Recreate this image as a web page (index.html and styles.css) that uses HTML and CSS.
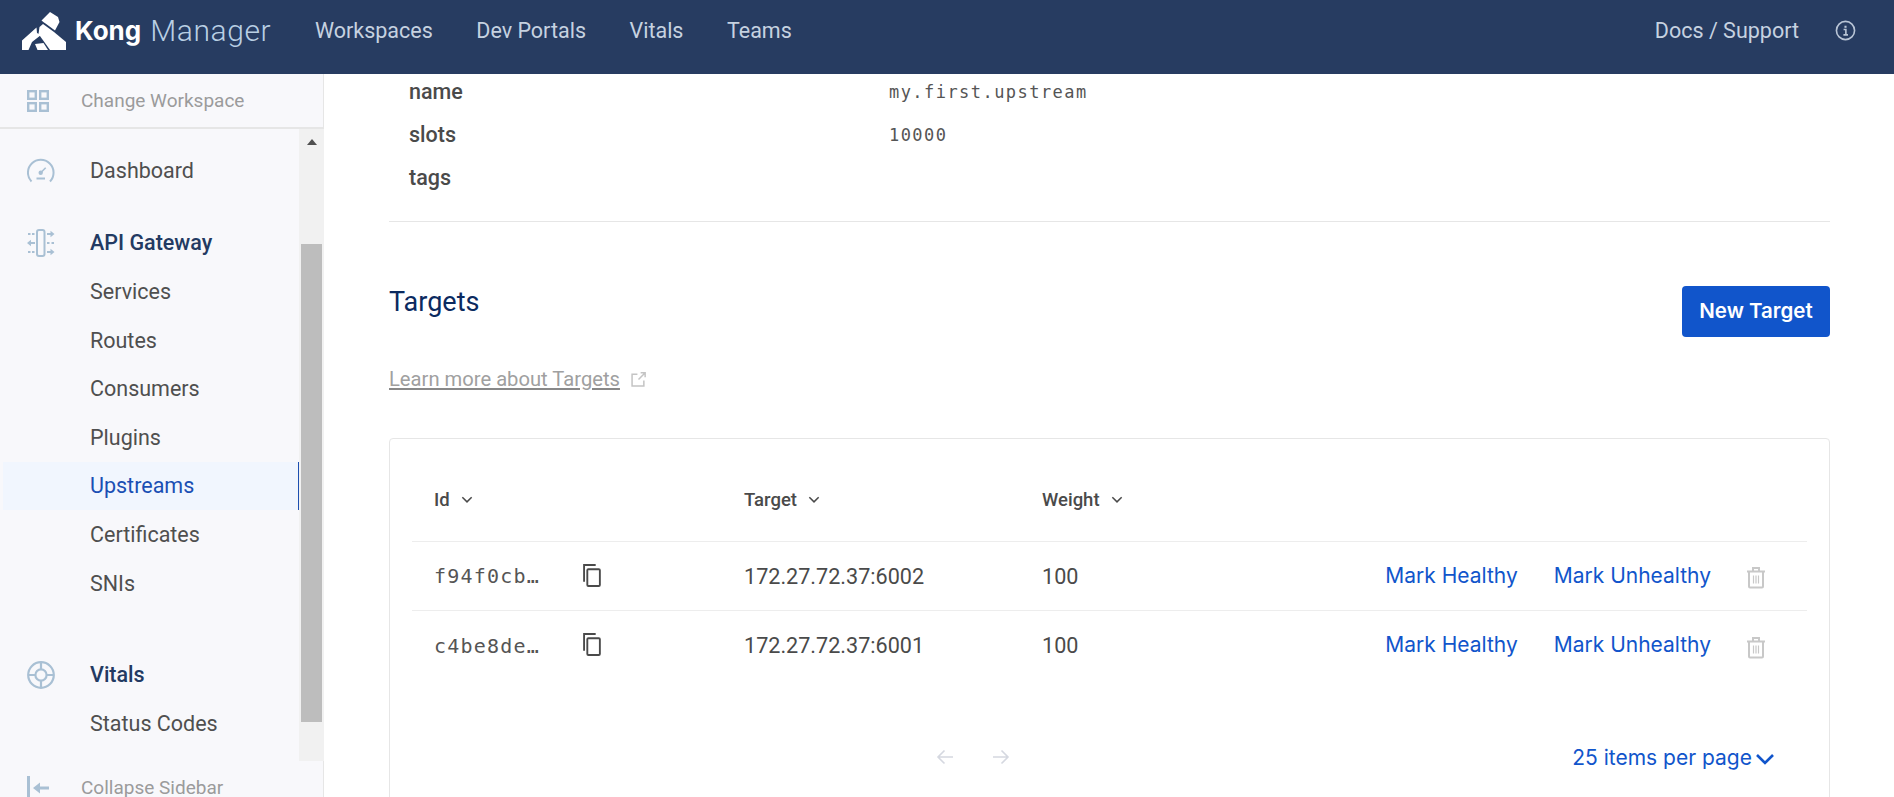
FILE: index.html
```html
<!DOCTYPE html>
<html lang="en">
<head>
	<meta charset="UTF-8">
	<title>Kong Manager</title>
	<link rel="stylesheet" href="styles.css">
</head>
<body>
	<header class="topbar">
		<div class="brand">
			<svg class="brand-logo" viewBox="0 0 44 38" fill="#fff"><path d="M19.500 8.500L28 0L36 5L37.500 10L33 18.500L23.500 11.500L22 10.500Z"/><path d="M21 12L32 20L44 30V38H28L16.500 22L17.500 15Z"/><path d="M0 28.500L14.500 15.500L15 21L19 23L10 30L6.500 38H0Z"/><path d="M13 32L21.500 31L26 38H15.500Z" /></svg>
			<span class="brand-kong">Kong</span>
			<span class="brand-manager">Manager</span>
		</div>
		<nav class="topnav">
			<a>Workspaces</a>
			<a>Dev Portals</a>
			<a>Vitals</a>
			<a>Teams</a>
		</nav>
		<div class="topbar-right">
			<a>Docs / Support</a>
			<svg class="info-icon" viewBox="0 0 22 22" fill="none" stroke="#b9c5d6" stroke-width="1.7"><circle cx="11" cy="11" r="9.5"/><path d="M9 10h2.400v5.500M8.800 15.600h4.800"/><path d="M11 6v2.200" stroke-width="2.200"/></svg>
		</div>
	</header>

	<div class="layout">
		<aside class="sidebar">
			<div class="side-top">
				<svg class="side-top-icon" viewBox="0 0 22 22" fill="none" stroke="#a9c0d4" stroke-width="2.400"><rect x="1.200" y="1.200" width="7.600" height="7.600"/><rect x="13.200" y="1.200" width="7.600" height="7.600"/><rect x="1.200" y="13.200" width="7.600" height="7.600"/><rect x="13.200" y="13.200" width="7.600" height="7.600"/></svg>
				<span>Change Workspace</span>
			</div>
			<div class="side-scroll">
				<div class="side-list">
					<div class="side-row side-dash">
						<svg class="side-icon" viewBox="0 0 28 24" fill="none" stroke="#a9c0d4" stroke-width="2"><path d="M4.500 23.500A12.800 12.800 0 1 1 23 23.500"/><path d="M9.500 20.500h8.500"/><path d="M13.700 14.700l5-5" stroke-width="1.600"/><circle cx="13.700" cy="14.700" r="2.200" fill="#a9c0d4" stroke="none"/></svg>
						<span>Dashboard</span>
					</div>
					<div class="side-row side-head side-gateway">
						<svg class="side-icon" viewBox="0 0 28 28" fill="none" stroke="#a9c0d4" stroke-width="2"><rect x="10" y="1" width="7.500" height="26" rx="2"/><path d="M1 5h2.500M5 5h2.500M20 5h4M3 14h5M20 14h2.500M24.500 14h2.500M1 23h2.500M5 23h2.500M20 23h4"/><path d="M23.500 1.800L27.500 5L23.500 8.200ZM4 10.800L0 14L4 17.200ZM23.500 19.800L27.500 23L23.500 26.200Z" fill="#a9c0d4" stroke="none"/></svg>
						<span>API Gateway</span>
					</div>
					<div class="side-row">Services</div>
					<div class="side-row">Routes</div>
					<div class="side-row">Consumers</div>
					<div class="side-row">Plugins</div>
					<div class="side-row side-active">Upstreams</div>
					<div class="side-row">Certificates</div>
					<div class="side-row">SNIs</div>
					<div class="side-row side-head side-vitals">
						<svg class="side-icon" viewBox="0 0 28 28" fill="none" stroke="#a9c0d4" stroke-width="2.200"><circle cx="14" cy="14" r="12.800"/><circle cx="14" cy="14" r="5.600"/><path d="M14 1.500v7M14 19.500v7M1.500 14h7M19.500 14h7"/></svg>
						<span>Vitals</span>
					</div>
					<div class="side-row">Status Codes</div>
				</div>
				<div class="scrollbar">
					<div class="scroll-arrow"></div>
					<div class="scroll-thumb"></div>
				</div>
			</div>
			<div class="side-bottom">
				<svg class="collapse-icon" viewBox="0 0 22 24" fill="#a9c0d4"><rect x="0" y="0" width="3" height="24"/><path d="M6 12l7-5.500v4h9v3h-9v4z"/></svg>
				<span>Collapse Sidebar</span>
			</div>
		</aside>

		<main class="content">
			<dl class="props">
				<div class="prop"><dt>name</dt><dd>my.first.upstream</dd></div>
				<div class="prop"><dt>slots</dt><dd>10000</dd></div>
				<div class="prop"><dt>tags</dt><dd></dd></div>
			</dl>

			<section class="targets-head">
				<div>
					<h2>Targets</h2>
					<p class="learn"><a>Learn more about Targets</a>
						<svg class="ext-icon" viewBox="0 0 14 14" fill="none" stroke="#c4c4c4" stroke-width="1.400"><path d="M6 2H1v11h11V8"/><path d="M7 7l6-6M9 .8h4.200V5"/></svg>
					</p>
				</div>
				<button class="btn-new">New Target</button>
			</section>

			<section class="card">
				<div class="t-row t-header">
					<div class="c-id">Id <svg class="caret" viewBox="0 0 10 6" fill="none" stroke="#4a4a4a" stroke-width="1.300"><path d="M1 1l4 4 4-4"/></svg></div>
					<div class="c-target">Target <svg class="caret" viewBox="0 0 10 6" fill="none" stroke="#4a4a4a" stroke-width="1.300"><path d="M1 1l4 4 4-4"/></svg></div>
					<div class="c-weight">Weight <svg class="caret" viewBox="0 0 10 6" fill="none" stroke="#4a4a4a" stroke-width="1.300"><path d="M1 1l4 4 4-4"/></svg></div>
				</div>
				<div class="t-row">
					<div class="c-id"><span class="mono">f94f0cb…</span>
						<svg class="copy" viewBox="0 0 18 22" fill="none" stroke="#4a4a4a" stroke-width="1.800"><path d="M13 1H1.900v16"/><rect x="5" y="5" width="12" height="16" rx="1"/></svg></div>
					<div class="c-target">172.27.72.37:6002</div>
					<div class="c-weight">100</div>
					<div class="c-actions">
						<a>Mark Healthy</a>
						<a>Mark Unhealthy</a>
						<svg class="trash" viewBox="0 0 20 22" fill="none" stroke="#c8c8c8" stroke-width="2"><path d="M1 5h18M7 4V1.500h6V4"/><path d="M3 5v15a1 1 0 0 0 1 1h12a1 1 0 0 0 1-1V5"/><path d="M7.500 9v8M10 9v8M12.500 9v8" stroke-width="1.200"/></svg>
					</div>
				</div>
				<div class="t-row">
					<div class="c-id"><span class="mono">c4be8de…</span>
						<svg class="copy" viewBox="0 0 18 22" fill="none" stroke="#4a4a4a" stroke-width="1.800"><path d="M13 1H1.900v16"/><rect x="5" y="5" width="12" height="16" rx="1"/></svg></div>
					<div class="c-target">172.27.72.37:6001</div>
					<div class="c-weight">100</div>
					<div class="c-actions">
						<a>Mark Healthy</a>
						<a>Mark Unhealthy</a>
						<svg class="trash" viewBox="0 0 20 22" fill="none" stroke="#c8c8c8" stroke-width="2"><path d="M1 5h18M7 4V1.500h6V4"/><path d="M3 5v15a1 1 0 0 0 1 1h12a1 1 0 0 0 1-1V5"/><path d="M7.500 9v8M10 9v8M12.500 9v8" stroke-width="1.200"/></svg>
					</div>
				</div>
				<div class="pager">
					<div class="pager-arrows">
						<svg viewBox="0 0 18 16" fill="none" stroke="#d5d8e0" stroke-width="1.600"><path d="M17 8H2M8.500 1.500L2 8l6.500 6.500"/></svg>
						<svg viewBox="0 0 18 16" fill="none" stroke="#d5d8e0" stroke-width="1.600"><path d="M1 8h15M9.500 1.500L16 8l-6.500 6.500"/></svg>
					</div>
					<div class="pager-size">25 items per page<svg viewBox="0 0 20 12" fill="none" stroke="#1155cb" stroke-width="2.600"><path d="M2 2l8 8 8-8"/></svg></div>
				</div>
			</section>
		</main>
	</div>
</body>
</html>
```

FILE: styles.css
```css
* {
	box-sizing: border-box;
}

html, body {
	margin: 0;
	padding: 0;
	height: 100%;
	overflow: hidden;
	background: #fff;
	font-family: Roboto, "Liberation Sans", sans-serif;
	color: #4a4a4a;
}

/* Top bar */

.topbar {
	display: flex;
	align-items: center;
	height: 74px;
	padding: 0 38px 13px 22px;
	background: #273c61;
}

.brand {
	display: flex;
	align-items: center;
	width: 293px;
	flex: none;
}

.brand-logo {
	width: 44px;
	height: 38px;
	margin-right: 9px;
}

.brand-kong {
	font-family: Inter, sans-serif;
	font-size: 26px;
	font-weight: 700;
	color: #fff;
	margin-right: 9px;
}

.brand-manager {
	font-size: 30px;
	font-weight: 300;
	letter-spacing: 0.600px;
	color: #b9cfe4;
}

.topnav {
	display: flex;
	gap: 43.500px;
	font-size: 21.500px;
	color: #c6d2e0;
}

.topbar-right {
	display: flex;
	align-items: center;
	gap: 36px;
	margin-left: auto;
	font-size: 21.500px;
	color: #c6d2e0;
}

.info-icon {
	width: 21px;
	height: 21px;
}

/* Sidebar */

.layout {
	display: flex;
	height: 723px;
}

.sidebar {
	display: flex;
	flex-direction: column;
	flex: none;
	width: 324px;
	background: #f8f8fb;
	border-right: 1px solid #e6e6e6;
}

.side-top {
	display: flex;
	align-items: center;
	flex: none;
	height: 55px;
	padding-left: 27px;
	border-bottom: 2px solid #e6e6e6;
	font-size: 19px;
	color: #9b9b9b;
}

.side-top-icon {
	flex: none;
	width: 22px;
	height: 22px;
	margin-right: 32px;
}

.side-scroll {
	display: flex;
	flex: none;
	height: 632px;
	margin-right: -1px;
}

.side-list {
	flex: 1;
	padding-top: 17px;
}

.side-row {
	display: flex;
	align-items: center;
	height: 48.600px;
	padding-left: 90px;
	font-size: 21.500px;
	color: #4f4f4f;
}

.side-icon {
	flex: none;
	width: 28px;
	height: 28px;
	margin-left: -63px;
	margin-right: 35px;
}

.side-dash {
	margin-bottom: 24px;
}

.side-head {
	font-weight: 500;
	color: #233a62;
}

.side-vitals {
	margin-top: 43px;
}

.side-active {
	margin-left: 3px;
	padding-left: 87px;
	background: #f1f6fe;
	border-right: 1px solid #1d4fb0;
	color: #1a4fb4;
}

.scrollbar {
	flex: none;
	width: 25px;
	background: #f1f1f1;
	padding: 0 2px;
}

.scroll-arrow {
	width: 0;
	height: 0;
	margin: 10px auto 0;
	border-left: 5.500px solid transparent;
	border-right: 5.500px solid transparent;
	border-bottom: 6px solid #505050;
}

.scroll-thumb {
	height: 478px;
	margin-top: 99px;
	background: #bdbdbd;
}

.side-bottom {
	display: flex;
	align-items: flex-start;
	height: 36px;
	padding-left: 27px;
	padding-top: 15px;
	font-size: 19px;
	line-height: 24px;
	color: #9b9b9b;
}

.collapse-icon {
	flex: none;
	width: 22px;
	height: 24px;
	margin-right: 32px;
}

/* Main column */

.content {
	flex: 1;
	min-width: 0;
	padding: 0 64px 0 65px;
	overflow: hidden;
}

.props {
	margin: -4px 0 0;
	padding: 0 0 22px 20px;
	border-bottom: 1px solid #e6e6e6;
}

.prop {
	display: flex;
	align-items: center;
	height: 43px;
}

dt {
	width: 480px;
	font-size: 21.500px;
	font-weight: 500;
	color: #4a4a4a;
}

dd {
	margin: 0;
	font-family: "DejaVu Sans Mono", monospace;
	font-size: 17px;
	letter-spacing: 1.450px;
	color: #555;
}

.targets-head {
	display: flex;
	justify-content: space-between;
	align-items: flex-start;
	padding-top: 64px;
	height: 216px;
}

h2 {
	margin: 0;
	font-size: 27px;
	font-weight: 400;
	line-height: 32px;
	color: #0b2a5f;
}

.learn {
	display: flex;
	align-items: center;
	gap: 11px;
	margin: 49px 0 0;
	font-size: 20.200px;
	color: #a0a0a0;
}

.learn a {
	text-decoration: underline;
	text-decoration-color: #888;
}

.ext-icon {
	width: 15px;
	height: 15px;
}

.btn-new {
	width: 148px;
	height: 51px;
	padding: 0 0 3px;
	border: 0;
	border-radius: 4px;
	background: #1155cb;
	color: #fff;
	font-family: Inter, sans-serif;
	font-size: 20.500px;
	font-weight: 600;
}

/* Targets table */

.card {
	height: 400px;
	padding: 0 22px;
	border: 1px solid #e6e6e6;
	border-radius: 4px;
}

.t-row {
	display: flex;
	align-items: center;
	height: 69px;
	padding-left: 22px;
	border-bottom: 1px solid #ededed;
	font-size: 21.600px;
}

.t-row.t-header {
	height: 103px;
	padding-top: 19px;
	font-size: 18.500px;
	font-weight: 500;
}

.t-row:nth-child(3) {
	border-bottom: 0;
}

.c-id {
	display: flex;
	align-items: center;
	width: 310px;
	flex: none;
}

.c-target {
	display: flex;
	align-items: center;
	width: 298px;
	flex: none;
}

.c-weight {
	display: flex;
	align-items: center;
	flex: none;
}

.caret {
	width: 12px;
	height: 7px;
	margin-left: 11px;
}

.mono {
	width: 148px;
	font-family: "DejaVu Sans Mono", monospace;
	font-size: 20px;
	letter-spacing: 1.200px;
	color: #555;
}

.copy {
	width: 19px;
	height: 23px;
	margin-bottom: 2px;
}

.c-actions {
	display: flex;
	align-items: center;
	margin-left: auto;
	padding-right: 41px;
	font-family: Inter, sans-serif;
	font-size: 21px;
	color: #1155cb;
}

.c-actions a {
	margin-right: 36px;
	margin-bottom: 2px;
}

.c-actions a:nth-child(2) {
	margin-right: 35px;
}

.trash {
	width: 20px;
	height: 23px;
	margin-top: 3px;
}

.pager {
	display: flex;
	align-items: center;
	height: 40px;
	margin-top: 57px;
}

.pager-arrows {
	display: flex;
	gap: 38px;
	margin-left: 524px;
}

.pager-arrows svg {
	width: 18px;
	height: 16px;
}

.pager-size {
	display: flex;
	align-items: center;
	gap: 3px;
	margin-left: auto;
	padding-right: 32px;
	font-family: Inter, sans-serif;
	font-size: 21px;
	color: #1155cb;
}

.pager-size svg {
	width: 20px;
	height: 12px;
	margin-top: 4px;
}
```
